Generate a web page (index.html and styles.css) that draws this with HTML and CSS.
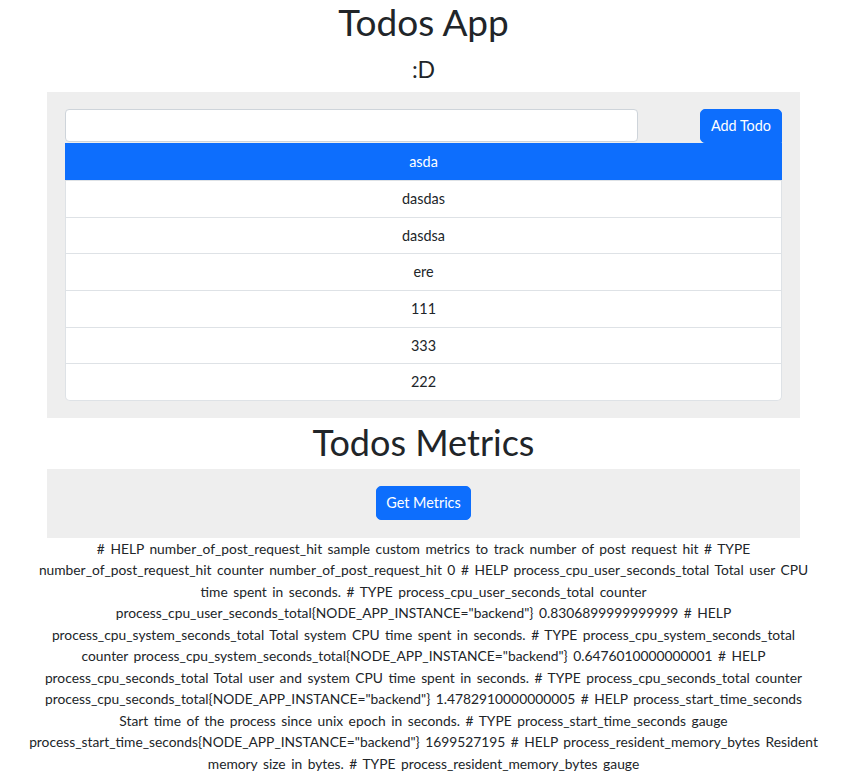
FILE: index.html
```html
<!DOCTYPE html>
<html>
<head>
<meta charset="utf-8">
<link rel="stylesheet" href="styles.css">
</head>
<body>
<div class="page">
  <h1 class="title">Todos App</h1>
  <h3 class="subtitle">:D</h3>
  <section class="panel todo-panel">
    <div class="form-row">
      <input class="todo-input" type="text">
      <button class="btn btn-add">Add Todo</button>
    </div>
    <ul class="list">
      <li class="item active">asda</li>
      <li class="item">dasdas</li>
      <li class="item">dasdsa</li>
      <li class="item">ere</li>
      <li class="item">111</li>
      <li class="item">333</li>
      <li class="item">222</li>
    </ul>
  </section>
  <h1 class="title metrics-title">Todos Metrics</h1>
  <section class="panel metrics-panel">
    <button class="btn btn-metrics">Get Metrics</button>
  </section>
  <p class="metrics-text"># HELP number_of_post_request_hit sample custom metrics to track number of post request hit # TYPE number_of_post_request_hit counter number_of_post_request_hit 0 # HELP process_cpu_user_seconds_total Total user CPU time spent in seconds. # TYPE process_cpu_user_seconds_total counter process_cpu_user_seconds_total{NODE_APP_INSTANCE="backend"} 0.8306899999999999 # HELP process_cpu_system_seconds_total Total system CPU time spent in seconds. # TYPE process_cpu_system_seconds_total counter process_cpu_system_seconds_total{NODE_APP_INSTANCE="backend"} 0.6476010000000001 # HELP process_cpu_seconds_total Total user and system CPU time spent in seconds. # TYPE process_cpu_seconds_total counter process_cpu_seconds_total{NODE_APP_INSTANCE="backend"} 1.4782910000000005 # HELP process_start_time_seconds Start time of the process since unix epoch in seconds. # TYPE process_start_time_seconds gauge process_start_time_seconds{NODE_APP_INSTANCE="backend"} 1699527195 # HELP process_resident_memory_bytes Resident memory size in bytes. # TYPE process_resident_memory_bytes gauge</p>
</div>
</body>
</html>
```
FILE: styles.css
```css
* { box-sizing: border-box; }
html, body { margin: 0; padding: 0; background: #fff; }
body {
  font-family: "Lato", "Open Sans", sans-serif;
  color: #212529;
  font-size: 14.4px;
  line-height: 1.5;
}
.page {
  width: 753px;
  margin: 0 0 0 47px;
  text-align: center;
}
.title {
  margin: 0;
  font-size: 37px;
  font-weight: 400;
  line-height: 1.2;
}
.subtitle {
  margin: 12px 0 8px;
  font-size: 23px;
  font-weight: 400;
  line-height: 1.2;
}
.panel { background: #eeeeee; }
.todo-panel { padding: 17px 18px 17px; }
.form-row {
  display: flex;
  justify-content: space-between;
  align-items: flex-start;
}
.todo-input {
  width: 573px;
  height: 33px;
  border: 1px solid #ced4da;
  border-radius: 4px;
  background: #fff;
  margin: 0;
}
.btn {
  font-family: inherit;
  font-size: 14.4px;
  line-height: 1.5;
  color: #fff;
  background: #0d6efd;
  border: 1px solid #0d6efd;
  border-radius: 5px;
  padding: 5px 10px;
  cursor: pointer;
}
.btn-add { height: 34px; border-radius: 5px 5px 0 5px; }
.list {
  list-style: none;
  margin: 0;
  padding: 0;
  background: #fff;
  border: 1px solid #dee2e6;
  border-top: 0;
  border-radius: 0 0 5px 5px;
}
.item {
  height: 36.67px;
  line-height: 35.67px;
  border-top: 1px solid #dee2e6;
  font-size: 14.4px;
}
.item.active {
  background: #0d6efd;
  color: #fff;
  height: 37px;
  line-height: 37px;
  border-top: 0;
  margin: 0 -1px;
}
.metrics-title { font-size: 36px; margin: 3.5px 0 4.3px; }
.metrics-panel {
  padding: 17px 0 18px;
  display: flex;
  justify-content: center;
}
.btn-metrics { height: 34px; padding: 5px 9px; }
.metrics-text {
  margin: 0 -19px;
  line-height: 21.5px;
  font-size: 13.8px;
  word-spacing: 2px;
  word-wrap: break-word;
}
```
